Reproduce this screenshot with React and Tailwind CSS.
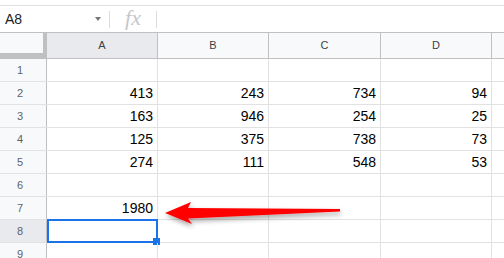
import React from 'react';

const rows = [
  [],
  ['413', '243', '734', '94'],
  ['163', '946', '254', '25'],
  ['125', '375', '738', '73'],
  ['274', '111', '548', '53'],
  [],
  ['1980'],
  [],
  [],
];

const colWidths = ['w-[111px]', 'w-[111px]', 'w-[112px]', 'w-[111px]'];
const cols = ['A', 'B', 'C', 'D'];

export default function App() {
  return (
    <div className="relative w-[504px] h-[258px] overflow-hidden bg-white font-['Liberation_Sans',Arial,sans-serif]">
      {/* top strip */}
      <div className="h-[6px] border-b border-[#e0e0e0]" />

      {/* formula bar */}
      <div className="h-[26px] flex items-center">
        <div className="w-[109px] h-full flex items-center pl-[5px] pr-[8px] text-[14px] text-[#202124]">
          <span className="flex-1">A8</span>
          <span className="w-0 h-0 border-l-[3.5px] border-r-[3.5px] border-t-[4px] border-l-transparent border-r-transparent border-t-[#777]" />
        </div>
        <div className="w-px h-[17px] bg-[#dadce0]" />
        <div className="w-[46px] flex items-center justify-center font-['Liberation_Serif',serif] italic text-[22px] text-[#c5c7ca] leading-none -mt-[2px]">
          fx
        </div>
        <div className="w-px h-[17px] bg-[#dadce0]" />
      </div>

      {/* column headers */}
      <div className="h-[27px] flex border-t border-b border-[#c0c0c0] text-[11px] text-[#3c4043]">
        <div className="w-[47px] h-full bg-[#f8f9fa] border-r-[4px] border-b-[5px] border-[#c0c0c0]" />
        {cols.map((c, i) => (
          <div
            key={c}
            className={`${colWidths[i]} h-full flex items-center justify-center border-r border-[#c0c0c0] ${i === 0 ? 'bg-[#e8eaed]' : 'bg-[#f8f9fa]'}`}
          >
            {c}
          </div>
        ))}
        <div className="flex-1 h-full bg-[#f8f9fa]" />
      </div>

      {/* rows */}
      {rows.map((r, ri) => (
        <div key={ri} className="h-[23px] flex border-b border-[#e2e2e3]">
          <div
            className={`w-[47px] h-full flex items-center justify-center pr-[6px] border-r border-[#c0c0c0] text-[11px] text-[#5f6368] ${ri === 7 ? 'bg-[#e8eaed]' : 'bg-[#f8f9fa]'}`}
          >
            {ri + 1}
          </div>
          {cols.map((c, ci) => (
            <div
              key={c}
              className={`relative ${colWidths[ci]} h-full flex items-center justify-end pr-[4px] border-r border-[#e2e2e3] text-[14px] text-black`}
            >
              {r[ci] || ''}
              {ri === 7 && ci === 0 && (
                <div className="absolute -top-px -bottom-px left-0 -right-px border-2 border-[#1a73e8]">
                  <div className="absolute -right-[4px] -bottom-[4px] w-[7px] h-[7px] bg-[#1a73e8]" />
                </div>
              )}
            </div>
          ))}
          <div className="flex-1 h-full" />
        </div>
      ))}

      {/* red arrow */}
      <svg className="absolute left-0 top-0 pointer-events-none" width="504" height="258">
        <defs>
          <filter id="sh" x="-20%" y="-50%" width="140%" height="200%">
            <feDropShadow dx="1" dy="3" stdDeviation="2.5" floodColor="#000" floodOpacity="0.35" />
          </filter>
        </defs>
        <polygon
          points="165,213 191,202 188,208 340,209 340,211.5 188,218.5 192,224"
          fill="#ff0000"
          filter="url(#sh)"
        />
      </svg>
    </div>
  );
}
